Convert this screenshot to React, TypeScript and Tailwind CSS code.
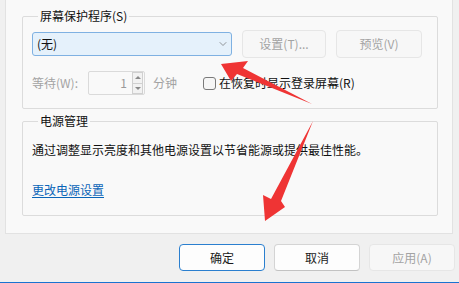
import { ChevronDown } from 'lucide-react';
import clsx from 'clsx';

function Btn({ label, primary, disabled, className }: { label: string; primary?: boolean; disabled?: boolean; className?: string }) {
  return (
    <button
      className={clsx(
        'flex items-center justify-center rounded-[4px] border text-[12px] leading-[16px]',
        primary && 'bg-[#fdfdfd] border-[#2a7fcf] text-[#1a1a1a]',
        !primary && !disabled && 'bg-[#fdfdfd] border-[#d4d4d4] border-b-[#c2c2c2] text-[#1a1a1a]',
        disabled && 'bg-[#f7f7f7] border-[#e6e6e6] text-[#a3a3a3]',
        className
      )}
    >
      {label}
    </button>
  );
}

// red annotation arrows drawn over the dialog
function Arrows() {
  return (
    <svg className="absolute left-0 top-0 pointer-events-none" width="459" height="283" viewBox="0 0 459 283">
      <polygon points="221,64 248,61 243,68 312,104 237,74 231,81" fill="#ef3434" />
      <polygon points="313,121 281,201 285,207 265,221 263,195 271,199" fill="#ef3434" />
    </svg>
  );
}

export default function App() {
  return (
    <div className="relative w-[459px] h-[283px] overflow-hidden bg-[#f0f0f0] flex flex-col font-['Noto_Sans_CJK_SC',sans-serif] text-[#111111]">
      {/* Tab page */}
      <div className="ml-[5px] mr-[6px] h-[234px] border-x border-b border-[#e2e2e2] bg-[#f9f9f9] pt-[8px] pl-[16px] pr-[14px]">
        {/* Screen saver group */}
        <fieldset className="border border-[#dcdcdc] rounded-[2px] pl-[9px] pr-[15px] pt-[6px] pb-[13px]">
          <legend className="ml-[6px] px-[2px] text-[12px] leading-[16px]">屏幕保护程序(S)</legend>
          <div className="flex items-center h-[28px]">
            <div className="w-[200px] h-[24px] rounded-[3px] border border-[#7fb1e2] bg-[#e5f1fb] flex items-center pl-[4px] pr-[2px] text-[12px]">
              <span className="flex-1">(无)</span>
              <ChevronDown className="w-[12px] h-[12px] text-[#5c5c5c]" strokeWidth={1.25} />
            </div>
            <Btn label="设置(T)..." disabled className="ml-[10px] w-[84px] h-[28px]" />
            <Btn label="预览(V)" disabled className="ml-[10px] w-[86px] h-[28px]" />
          </div>
          <div className="flex items-center h-[24px] mt-[13px] text-[12px]">
            <span className="w-[56px] text-[#a3a3a3]">等待(W):</span>
            <div className="w-[57px] h-[24px] border border-[#dadada] rounded-[2px] bg-[#f9f9f9] flex items-center">
              <span className="flex-1 text-right pr-[5px] text-[#9a9a9a]">1</span>
              <div className="w-[11px] h-[22px] mr-[1px] flex flex-col">
                <div className="flex-1 border border-[#d0d0d0] bg-[#f2f2f2] flex items-center justify-center">
                  <span className="w-0 h-0 border-x-[3px] border-x-transparent border-b-[3px] border-b-[#8a8a8a]" />
                </div>
                <div className="flex-1 border border-t-0 border-[#d0d0d0] bg-[#f2f2f2] flex items-center justify-center">
                  <span className="w-0 h-0 border-x-[3px] border-x-transparent border-t-[3px] border-t-[#8a8a8a]" />
                </div>
              </div>
            </div>
            <span className="ml-[8px] text-[#a3a3a3]">分钟</span>
            <span className="ml-[26px] w-[13px] h-[13px] rounded-[3px] border border-[#7a7a7a] bg-[#f6f6f6]" />
            <span className="ml-[3px]">在恢复时显示登录屏幕(R)</span>
          </div>
        </fieldset>

        {/* Power group */}
        <fieldset className="mt-[4px] border border-[#dcdcdc] rounded-[2px] pl-[9px] pt-[13px] pb-[17px]">
          <legend className="ml-[6px] px-[2px] text-[12px] leading-[16px]">电源管理</legend>
          <p className="text-[12px] leading-[16px]">通过调整显示亮度和其他电源设置以节省能源或提供最佳性能。</p>
          <a className="block mt-[24px] text-[12px] leading-[16px] text-[#0a65b8] underline underline-offset-2">更改电源设置</a>
        </fieldset>
      </div>

      {/* Dialog buttons */}
      <div className="mt-[10px] flex justify-end gap-[9px] pr-[4px]">
        <Btn label="确定" primary className="w-[86px] h-[27px]" />
        <Btn label="取消" className="w-[86px] h-[27px]" />
        <Btn label="应用(A)" disabled className="w-[86px] h-[27px]" />
      </div>

      <div className="flex-1" />
      <div className="h-px bg-[#1a73d0]" />

      <Arrows />
    </div>
  );
}
